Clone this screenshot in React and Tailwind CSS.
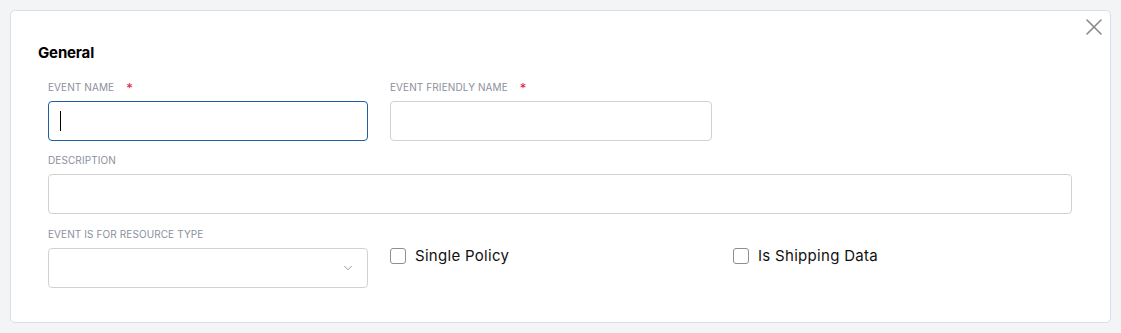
import { X, ChevronDown } from "lucide-react"

function Label({ children, required }) {
  return (
    <div className="flex items-center h-[14px] mb-[7px] text-[10px] uppercase text-[#8b909e] tracking-[0.01em]">
      <span>{children}</span>
      {required && <span className="ml-[12px] text-[#e0203a] text-[13px] leading-none mt-[3px]">*</span>}
    </div>
  )
}

function Checkbox({ label }) {
  return (
    <label className="flex items-center gap-[9px] h-[40px]">
      <span className="w-[16px] h-[16px] rounded-[3px] border border-[#8e8e8e] bg-white" />
      <span className="text-[15px] text-[#111] tracking-[0.02em]">{label}</span>
    </label>
  )
}

export default function App() {
  return (
    <div className="min-h-screen bg-[#f3f4f6] p-[10px] font-['Inter',sans-serif]">
      <div className="relative bg-white border border-[#dcdde9] rounded-[5px] h-[313px] w-[1101px] pt-[33px] pl-[27px]">
        <button className="absolute right-[2px] top-[2px] text-[#8a8a8a]">
          <X size={28} strokeWidth={1.4} />
        </button>
        <h2 className="text-[15px] font-bold text-black leading-[18px] tracking-[-0.01em]">General</h2>

        <div className="pl-[10px] mt-[18px]">
          <div className="flex gap-[22px]">
            <div className="w-[320px]">
              <Label required>Event Name</Label>
              <div className="h-[40px] rounded-[4px] border border-[#1c5fa5] flex items-center pl-[11px]">
                <span className="w-px h-[20px] bg-black" />
              </div>
            </div>
            <div className="w-[322px]">
              <Label required>Event Friendly Name</Label>
              <div className="h-[40px] rounded-[4px] border border-[#d2d2d2]" />
            </div>
          </div>

          <div className="mt-[12px] w-[1024px]">
            <Label>Description</Label>
            <div className="h-[40px] rounded-[4px] border border-[#d2d2d2]" />
          </div>

          <div className="mt-[13px] flex gap-[22px] items-end">
            <div className="w-[320px]">
              <Label>Event is for resource type</Label>
              <div className="h-[40px] rounded-[4px] border border-[#d2d2d2] flex items-center justify-end pr-[12px]">
                <ChevronDown size={14} strokeWidth={1.5} className="text-[#8a8a8a]" />
              </div>
            </div>
            <div className="w-[321px] mb-[12px]">
              <Checkbox label="Single Policy" />
            </div>
            <div className="mb-[12px]">
              <Checkbox label="Is Shipping Data" />
            </div>
          </div>
        </div>
      </div>
    </div>
  )
}
